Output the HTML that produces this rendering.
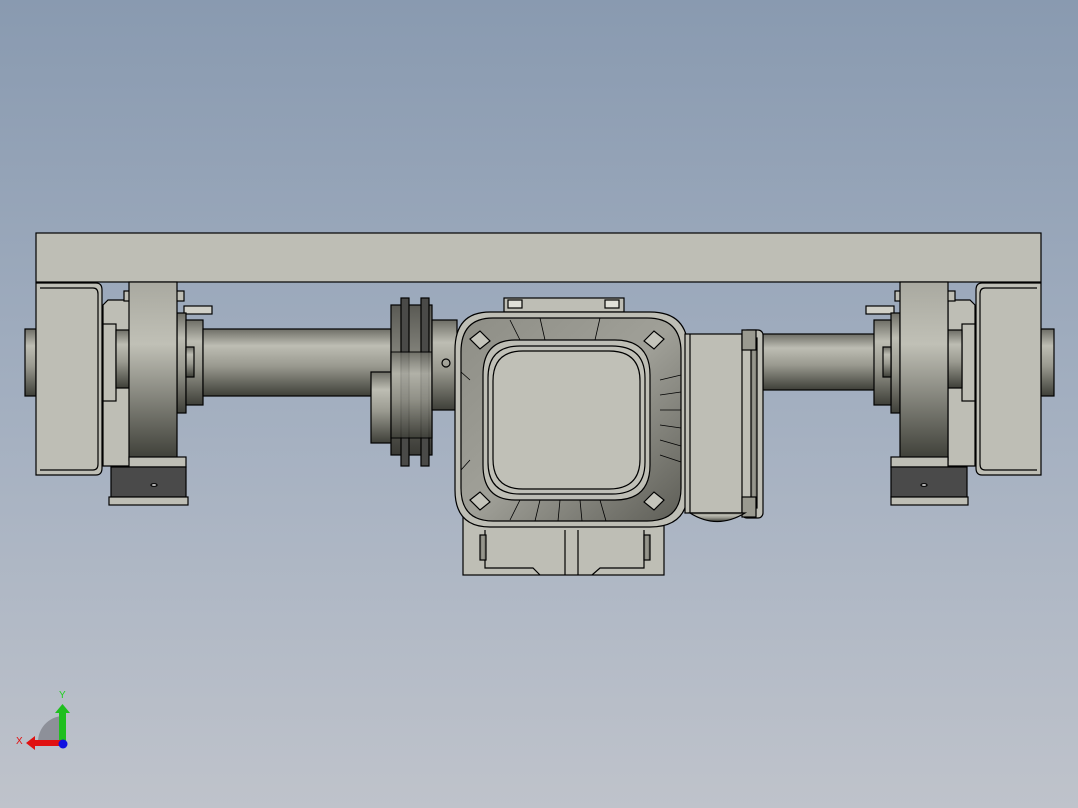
<!DOCTYPE html>
<html><head><meta charset="utf-8"><style>
html,body{margin:0;padding:0;width:1078px;height:808px;overflow:hidden}
body{background:linear-gradient(#899ab0 0%,#a3afc0 50%,#bfc3cb 100%)}
svg{position:absolute;left:0;top:0}
</style></head><body>
<svg width="1078" height="808" viewBox="0 0 1078 808" stroke="#000" stroke-width="1.2">
<defs>
<linearGradient id="cyl" x1="0" y1="0" x2="0" y2="1">
<stop offset="0" stop-color="#6e6e66"/><stop offset=".25" stop-color="#bdbdb3"/><stop offset=".55" stop-color="#9a9a90"/><stop offset="1" stop-color="#3e3f38"/></linearGradient>
<linearGradient id="wheel" x1="0" y1="0" x2="0" y2="1">
<stop offset="0" stop-color="#a9a9a0"/><stop offset=".35" stop-color="#c0c0b6"/><stop offset="1" stop-color="#3d3e37"/></linearGradient>
<linearGradient id="ring" x1="0" y1="0" x2="0" y2="1">
<stop offset="0" stop-color="#5a5a54"/><stop offset=".4" stop-color="#8a8a82"/><stop offset="1" stop-color="#3a3a35"/></linearGradient>
<linearGradient id="gb" x1="0" y1="0" x2="1" y2="1">
<stop offset="0" stop-color="#8e8e86"/><stop offset=".5" stop-color="#a0a098"/><stop offset="1" stop-color="#5e5e57"/></linearGradient>
<linearGradient id="rim" x1="0" y1="0" x2="1" y2="0">
<stop offset="0" stop-color="#7a7a72"/><stop offset=".5" stop-color="#9c9c92"/><stop offset="1" stop-color="#6a6a62"/></linearGradient>
</defs>
<rect x="36" y="233" width="1005" height="49" fill="#bebeb5"/>
<rect x="25" y="329" width="11" height="67" fill="url(#cyl)"/>
<path d="M36 283 H96 Q102 283 102 290 V468 Q102 475 96 475 H36 Z" fill="#bebeb5"/>
<path d="M40 288 H93 Q98 288 98 294 V464 Q98 470 93 470 H40" fill="none"/>
<path d="M103 305 L108 300 H130 V466 H103 Z" fill="#bebeb5"/>
<rect x="103" y="324" width="13" height="77" fill="#bebeb5"/>
<rect x="116" y="330" width="13" height="58" fill="url(#cyl)"/>
<rect x="124" y="291" width="60" height="10" fill="#bebeb5"/>
<rect x="184" y="306" width="28" height="8" fill="#d0d0c8"/>
<rect x="177" y="313" width="9" height="100" fill="url(#cyl)"/>
<rect x="186" y="320" width="17" height="85" fill="url(#cyl)"/>
<rect x="186" y="347" width="8" height="30" fill="url(#cyl)"/>
<rect x="203" y="329" width="188" height="67" fill="url(#cyl)"/>
<rect x="129" y="282" width="48" height="178" fill="url(#wheel)"/>
<rect x="129" y="457" width="57" height="10" fill="#bebeb5"/>
<rect x="111" y="467" width="75" height="30" fill="#4a4a4a"/>
<rect x="109" y="497" width="79" height="8" fill="#bebeb5"/>
<ellipse cx="154" cy="485" rx="3" ry="1.3" fill="#fff"/>
<rect x="371" y="372" width="22" height="71" fill="url(#cyl)"/>
<rect x="391" y="305" width="41" height="150" fill="url(#ring)"/>
<rect x="401" y="298" width="8" height="168" fill="#4a4a48"/>
<rect x="421" y="298" width="8" height="168" fill="#4a4a48"/>
<rect x="391" y="352" width="41" height="86" fill="url(#cyl)" opacity=".8"/>
<rect x="432" y="320" width="25" height="90" fill="url(#cyl)"/>
<circle cx="446" cy="363" r="4" fill="none"/>
<rect x="463" y="515" width="201" height="60" fill="#bebeb5"/>
<path d="M485 530 V568 H533 L540 575 M565 530 V575 M578 530 V575 M644 530 V568 H600 L592 575" fill="none"/>
<rect x="480" y="535" width="6" height="25" fill="url(#rim)"/>
<rect x="644" y="535" width="6" height="25" fill="url(#rim)"/>
<rect x="504" y="298" width="120" height="14" fill="#bebeb5"/>
<rect x="508" y="300" width="14" height="8" fill="#e0e0d8"/>
<rect x="605" y="300" width="14" height="8" fill="#e0e0d8"/>
<path d="M490 312 H650 Q688 312 688 350 V490 Q688 527 650 527 H490 Q455 527 455 490 V350 Q455 312 490 312 Z" fill="#bebeb5"/>
<path d="M493 318 H647 Q681 318 681 352 V488 Q681 521 647 521 H493 Q461 521 461 488 V352 Q461 318 493 318 Z" fill="url(#gb)"/>
<path d="M515 340 H615 Q650 340 650 375 V465 Q650 500 615 500 H515 Q483 500 483 465 V375 Q483 340 515 340 Z" fill="#bebeb5"/>
<path d="M520 346 H612 Q645 346 645 378 V462 Q645 494 612 494 H520 Q488 494 488 462 V378 Q488 346 520 346 Z" fill="#c0c0b7"/>
<path d="M523 351 H609 Q640 351 640 381 V459 Q640 489 609 489 H523 Q493 489 493 459 V381 Q493 351 523 351 Z" fill="none"/>
<g fill="#c4c4bb"><path d="M470 339 L480 331 L490 341 L480 349 Z"/><path d="M644 341 L654 331 L664 339 L654 349 Z"/><path d="M470 500 L480 492 L490 502 L480 510 Z"/><path d="M644 502 L654 492 L664 500 L654 510 Z"/></g>
<g stroke-width=".8" fill="none"><path d="M660 380 L681 375 M660 395 L681 392 M660 410 L681 410 M660 425 L681 428 M660 440 L681 446 M660 455 L681 462 M520 500 L510 520 M540 500 L535 521 M560 500 L558 521 M580 500 L582 521 M600 500 L606 521 M520 340 L510 320 M545 340 L540 318 M595 340 L600 318 M470 380 L461 372 M470 460 L461 470"/></g>
<rect x="763" y="334" width="112" height="56" fill="url(#cyl)"/>
<rect x="685" y="334" width="60" height="179" fill="#bebeb5"/>
<path d="M690 334 V513" fill="none"/>
<rect x="742" y="330" width="21" height="188" rx="5" fill="#bebeb5"/>
<rect x="751" y="338" width="6" height="170" fill="url(#rim)"/>
<rect x="742" y="330" width="14" height="20" fill="#9a9a90"/>
<rect x="742" y="497" width="14" height="20" fill="#9a9a90"/>
<path d="M690 513 Q717 530 745 513 Z" fill="url(#cyl)"/>
<rect x="1041" y="329" width="13" height="67" fill="url(#cyl)"/>
<path d="M1041 283 H982 Q976 283 976 290 V468 Q976 475 982 475 H1041 Z" fill="#bebeb5"/>
<path d="M1037 288 H985 Q980 288 980 294 V464 Q980 470 985 470 H1037" fill="none"/>
<path d="M975 305 L970 300 H948 V466 H975 Z" fill="#bebeb5"/>
<rect x="962" y="324" width="13" height="77" fill="#bebeb5"/>
<rect x="948" y="330" width="14" height="58" fill="url(#cyl)"/>
<rect x="895" y="291" width="60" height="10" fill="#bebeb5"/>
<rect x="866" y="306" width="28" height="8" fill="#d0d0c8"/>
<rect x="891" y="313" width="9" height="100" fill="url(#cyl)"/>
<rect x="874" y="320" width="17" height="85" fill="url(#cyl)"/>
<rect x="883" y="347" width="8" height="30" fill="url(#cyl)"/>
<rect x="900" y="282" width="48" height="178" fill="url(#wheel)"/>
<rect x="891" y="457" width="57" height="10" fill="#bebeb5"/>
<rect x="891" y="467" width="76" height="30" fill="#4a4a4a"/>
<rect x="891" y="497" width="77" height="8" fill="#bebeb5"/>
<ellipse cx="924" cy="485" rx="3" ry="1.3" fill="#fff"/>
<g stroke="none">
<path d="M38 742 A26 26 0 0 1 62 716 V742 Z" fill="#8d9099"/>
<rect x="59" y="712" width="7" height="30" fill="#1fbf1f"/>
<path d="M55 713 L62.5 704 L70 713 Z" fill="#1fbf1f"/>
<rect x="34" y="740" width="28" height="6" fill="#e01010"/>
<path d="M35 736 L26 743 L35 750 Z" fill="#e01010"/>
<circle cx="63" cy="744" r="4.5" fill="#1010e0"/>
<text x="59" y="698" font-family="Liberation Sans,sans-serif" font-size="10" fill="#20d020">Y</text>
<text x="16" y="744" font-family="Liberation Sans,sans-serif" font-size="10" fill="#e01010">X</text>
</g>
</svg>
</body></html>
